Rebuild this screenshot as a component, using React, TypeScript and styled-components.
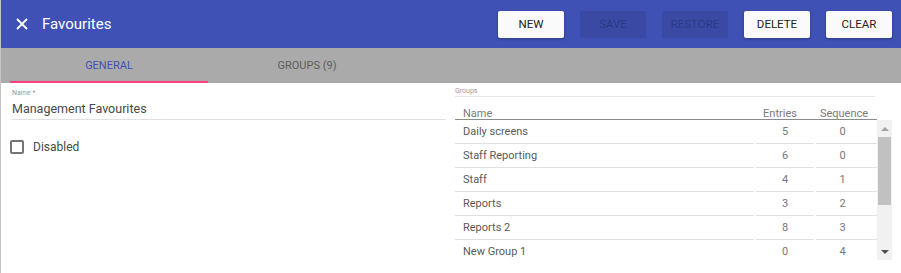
import React from "react";
import styled, { createGlobalStyle, css } from "styled-components";

const GlobalStyle = createGlobalStyle`
  html, body { margin: 0; padding: 0; background: #ffffff; }
  body { font-family: Roboto, "Liberation Sans", Arial, sans-serif; }
  * { box-sizing: border-box; }
`;

const Page = styled.div`
  width: 901px;
  height: 273px;
  border-left: 1px solid #c4c4c4;
  background: #ffffff;
  overflow: hidden;
  display: flex;
  flex-direction: column;
`;

const Header = styled.header`
  height: 48px;
  flex: none;
  background: #3f51b5;
  display: flex;
  align-items: center;
  padding: 0 9px 0 15px;
`;

const CloseIcon = styled.svg`
  width: 12px;
  height: 12px;
  flex: none;
`;

const Title = styled.h1`
  margin: 0 0 0 14px;
  font-size: 15px;
  font-weight: 400;
  color: #ffffff;
  flex: 1;
`;

const Actions = styled.div`
  display: flex;
  gap: 16px;
`;

const ActionButton = styled.button<{ $disabled?: boolean }>`
  width: 66px;
  height: 27px;
  border: none;
  border-radius: 2px;
  font-family: Roboto, "Liberation Sans", Arial, sans-serif;
  font-size: 11.5px;
  font-weight: 400;
  padding: 0;
  ${(p) =>
    p.$disabled
      ? css`
          background: rgba(0, 0, 0, 0.09);
          color: rgba(0, 0, 0, 0.22);
        `
      : css`
          background: #fafafa;
          color: #222222;
          box-shadow: 0 1px 3px rgba(0, 0, 0, 0.3);
        `}
`;

const TabBar = styled.nav`
  height: 35px;
  flex: none;
  background: #aaaaaa;
  display: flex;
  padding-left: 9px;
`;

const Tab = styled.div<{ $active?: boolean }>`
  width: 198px;
  height: 35px;
  display: flex;
  align-items: center;
  justify-content: center;
  font-size: 11px;
  color: ${(p) => (p.$active ? "#3f51b5" : "#5e5e5e")};
  box-shadow: ${(p) => (p.$active ? "inset 0 -2px 0 #ff4081" : "none")};
`;

const Content = styled.main`
  flex: 1;
  display: flex;
`;

const LeftPanel = styled.section`
  width: 446px;
  flex: none;
  padding: 0 1px 0 9px;
`;

const Field = styled.div`
  margin: 6px 0 0 2px;
`;

const FieldLabel = styled.div`
  font-size: 7px;
  line-height: 9px;
  color: #9a9a9a;
`;

const FieldValue = styled.div`
  height: 22px;
  line-height: 22px;
  font-size: 12.5px;
  color: #484848;
  border-bottom: 1px solid #e0e0e0;
`;

const CheckRow = styled.label`
  display: flex;
  align-items: center;
  gap: 9px;
  margin-top: 20px;
  font-size: 12px;
  color: #4a4a4a;
`;

const CheckBox = styled.span`
  width: 14px;
  height: 14px;
  border: 2px solid #757575;
  border-radius: 2px;
  flex: none;
`;

const RightPanel = styled.section`
  margin-left: 8px;
  width: 437px;
  flex: none;
`;

const GroupsLabel = styled.div`
  margin-top: 4px;
  width: 420px;
  font-size: 7px;
  line-height: 9px;
  color: #9a9a9a;
  border-bottom: 1px solid #e6e6e6;
`;

const TableHead = styled.div`
  width: 422px;
  height: 23px;
  display: flex;
  gap: 2px;
  border-bottom: 1px solid #8a8a8a;
`;

const HeadCell = styled.div<{ $w: number; $pad?: string }>`
  width: ${(p) => p.$w}px;
  flex: none;
  padding: ${(p) => p.$pad || "0"};
  padding-top: 10px;
  font-size: 11px;
  line-height: 13px;
  color: #7a7a7a;
  text-align: ${(p) => (p.$pad ? "center" : "left")};
`;

const BodyWrap = styled.div`
  display: flex;
  height: 140px;
`;

const Rows = styled.div`
  width: 422px;
  overflow: hidden;
`;

const Row = styled.div`
  display: flex;
  gap: 2px;
  height: 24px;
`;

const Cell = styled.div<{ $w: number; $align?: "left" | "center"; $pad?: string }>`
  width: ${(p) => p.$w}px;
  flex: none;
  height: 24px;
  line-height: 23px;
  border-bottom: 1px solid #e0e0e0;
  font-size: 11px;
  color: ${(p) => (p.$align === "center" ? "#777777" : "#5a5a5a")};
  text-align: ${(p) => p.$align || "left"};
  padding: ${(p) => p.$pad || "0"};
`;

const ScrollTrack = styled.div`
  width: 15px;
  background: #f1f1f1;
  display: flex;
  flex-direction: column;
`;

const ScrollButton = styled.div`
  height: 17px;
  display: flex;
  align-items: center;
  justify-content: center;
`;

const ScrollThumb = styled.div`
  margin: 0 1px;
  height: 68px;
  background: #c1c1c1;
`;

const ScrollSpace = styled.div`
  flex: 1;
`;

const Arrow = styled.span<{ $dir: "up" | "down"; $color: string }>`
  width: 0;
  height: 0;
  border-left: 4px solid transparent;
  border-right: 4px solid transparent;
  ${(p) =>
    p.$dir === "up"
      ? css`border-bottom: 4px solid ${p.$color};`
      : css`border-top: 4px solid ${p.$color};`}
`;

const groups = [
  { name: "Daily screens", entries: 5, seq: 0 },
  { name: "Staff Reporting", entries: 6, seq: 0 },
  { name: "Staff", entries: 4, seq: 1 },
  { name: "Reports", entries: 3, seq: 2 },
  { name: "Reports 2", entries: 8, seq: 3 },
  { name: "New Group 1", entries: 0, seq: 4 },
];

export default function App() {
  return (
    <>
      <GlobalStyle />
      <Page>
        <Header>
          <CloseIcon viewBox="0 0 12 12">
            <path d="M1 1 L11 11 M11 1 L1 11" stroke="#ffffff" strokeWidth="1.8" fill="none" />
          </CloseIcon>
          <Title>Favourites</Title>
          <Actions>
            <ActionButton>NEW</ActionButton>
            <ActionButton $disabled>SAVE</ActionButton>
            <ActionButton $disabled>RESTORE</ActionButton>
            <ActionButton>DELETE</ActionButton>
            <ActionButton>CLEAR</ActionButton>
          </Actions>
        </Header>
        <TabBar>
          <Tab $active>GENERAL</Tab>
          <Tab>GROUPS (9)</Tab>
        </TabBar>
        <Content>
          <LeftPanel>
            <Field>
              <FieldLabel>Name *</FieldLabel>
              <FieldValue>Management Favourites</FieldValue>
            </Field>
            <CheckRow>
              <CheckBox />
              Disabled
            </CheckRow>
          </LeftPanel>
          <RightPanel>
            <GroupsLabel>Groups</GroupsLabel>
            <TableHead>
              <HeadCell $w={299} style={{ paddingLeft: 8 }}>Name</HeadCell>
              <HeadCell $w={58} $pad="0 10px 0 0">Entries</HeadCell>
              <HeadCell $w={61} $pad="0 5px 0 0">Sequence</HeadCell>
            </TableHead>
            <BodyWrap>
              <Rows>
                {groups.map((g) => (
                  <Row key={g.name}>
                    <Cell $w={299} $pad="0 0 0 8px">{g.name}</Cell>
                    <Cell $w={58} $align="center">{g.entries}</Cell>
                    <Cell $w={61} $align="center" $pad="0 8px 0 0">{g.seq}</Cell>
                  </Row>
                ))}
              </Rows>
              <ScrollTrack>
                <ScrollButton>
                  <Arrow $dir="up" $color="#a3a3a3" />
                </ScrollButton>
                <ScrollThumb />
                <ScrollSpace />
                <ScrollButton>
                  <Arrow $dir="down" $color="#505050" />
                </ScrollButton>
              </ScrollTrack>
            </BodyWrap>
          </RightPanel>
        </Content>
      </Page>
    </>
  );
}
